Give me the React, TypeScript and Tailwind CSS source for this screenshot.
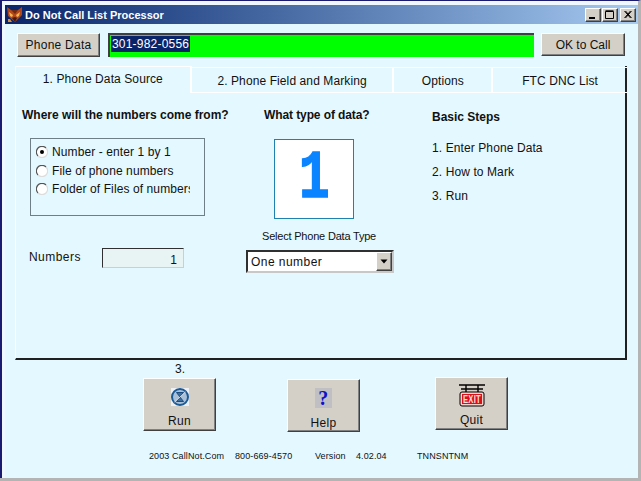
const raised =
  'bg-[#d4d0c8] border border-t-white border-l-white border-r-[#404040] border-b-[#404040] shadow-[inset_-1px_-1px_0_#808080]';

function FoxIcon() {
  return (
    <svg width="16" height="16" viewBox="0 0 16 16" className="shrink-0">
      <path d="M0 0 L4 3 H11 L15 0 L15 8 L8 15 L1 9 Z" fill="#b0481c" />
      <path d="M2 5 L6 8 L5 10 L3 9 Z M13 5 L9 8 L10 10 L12 9 Z" fill="#f0b848" />
      <path d="M5 11 L8 15 L10 11 L8 10 Z" fill="#4a1808" />
      <path d="M4 3 H11 L8 7 Z" fill="#702810" />
      <path d="M3 12 H1 V15 H5 Z" fill="#d89040" />
    </svg>
  );
}

function WinButton({ kind }: { kind: 'min' | 'max' | 'close' }) {
  return (
    <div className={`${raised} w-4 h-[14px] flex items-center justify-center`}>
      <svg width="10" height="9" viewBox="0 0 10 9">
        {kind === 'min' && <rect x="1" y="7" width="6" height="2" fill="#000" />}
        {kind === 'max' && <path d="M0.5 1.5 H8.5 V8.5 H0.5 Z M0.5 0.8 H8.5" fill="none" stroke="#000" />}
        {kind === 'close' && <path d="M1.5 1 L7.5 8 M2.5 1 L8.5 8 M7.5 1 L1.5 8 M8.5 1 L2.5 8" stroke="#000" />}
      </svg>
    </div>
  );
}

function Radio({ checked, label }: { checked?: boolean; label: string }) {
  return (
    <div className="flex items-center h-[18.5px] gap-[4px] whitespace-nowrap tracking-[0.1px]">
      <svg width="12" height="12" viewBox="0 0 12 12" className="shrink-0">
        <circle cx="6" cy="6" r="5.5" fill="#fff" />
        <path d="M10 2 A5.5 5.5 0 0 0 2 10" fill="none" stroke="#555" strokeWidth="1.2" />
        <path d="M10 2 A5.5 5.5 0 0 1 2 10" fill="none" stroke="#ddd" strokeWidth="1.2" />
        {checked && <circle cx="6" cy="6" r="2" fill="#000" />}
      </svg>
      <span className="w-[138px] overflow-hidden">{label}</span>
    </div>
  );
}

function Tab({ width, active, label }: { width: string; active?: boolean; label: string }) {
  return (
    <div
      className={`${width} flex justify-center border-r-2 border-[#202020] ${
        active ? 'h-[27px] pt-[5px] bg-[#e4f8ff] border-t border-white' : 'h-[26px] mt-[1px] pt-[6px] border-t border-b border-white'
      }`}
    >
      {label}
    </div>
  );
}

function RunIcon() {
  return (
    <svg width="20" height="20" viewBox="0 0 20 20">
      <rect x="1" y="1" width="18" height="18" fill="#eef0f4" />
      <circle cx="10" cy="10" r="8" fill="#a9c0d8" stroke="#1c5a96" strokeWidth="2" />
      <path d="M6.5 5.5 H13.5 L6.5 14.5 H13.5 Z" fill="#3c6fa0" stroke="#1c4c80" />
      <path d="M4.5 15 L15.5 5" stroke="#d0dce8" strokeWidth="1" />
    </svg>
  );
}

function HelpIcon() {
  return (
    <div className="w-[17px] h-5 bg-[#bfbfc4] flex items-center justify-center text-[#1010c8] font-bold text-[20px] leading-none font-['Liberation_Serif',serif]">
      ?
    </div>
  );
}

function ExitIcon() {
  return (
    <svg width="26" height="23" viewBox="0 0 26 23">
      <path d="M0 1 H26 M7 1 V8 M19 1 V8 M2 5 H24" stroke="#000" strokeWidth="1.4" fill="none" />
      <rect x="1" y="8" width="24" height="14" rx="2" fill="#f4d0c8" stroke="#000" />
      <rect x="3" y="10" width="20" height="10" fill="#e00c18" />
      <text transform="translate(13 19) scale(0.85 1.3)" textAnchor="middle" fontSize="9" fontWeight="700" fill="#f8e0e0" fontFamily="Liberation Sans, sans-serif">
        EXIT
      </text>
    </svg>
  );
}

export default function App() {
  return (
    <div className="w-[641px] h-[481px] overflow-hidden bg-[#b4b4b4] font-['Liberation_Sans',Arial,sans-serif] text-[12px] leading-[14px] tracking-[0.1px] text-[#111]">
      <div className="h-[478px] border-t border-t-[#1a1a70] border-l-2 border-l-[#1a1a70] border-r-[3px] border-r-[#b4b4b4] bg-[#f0f8ff] pt-[4px] pl-[3px] pr-0 flex flex-col">
        {/* title bar */}
        <div className="h-[19px] shrink-0 flex items-center pl-[2px] pr-[2px] bg-gradient-to-r from-[#0a246a] to-[#a6caf0]">
          <FoxIcon />
          <span className="ml-[2px] text-white font-bold text-[11px] tracking-[0px]">Do Not Call List Processor</span>
          <div className="ml-auto flex">
            <WinButton kind="min" />
            <div className="ml-[1px]"><WinButton kind="max" /></div>
            <div className="ml-[2px]"><WinButton kind="close" /></div>
          </div>
        </div>

        <div className="flex-1 bg-[#e4f8ff] flex flex-col">
          {/* phone row */}
          <div className="h-[42px] shrink-0 flex items-start pt-[9px] pl-[12px]">
            <div className={`${raised} w-[83px] h-[24px] flex items-center justify-center tracking-[0.25px]`}>Phone Data</div>
            <div className="ml-[8px] w-[426px] h-[24px] bg-[#00ff00] border-t-2 border-l-2 border-t-[#404040] border-l-[#404040] pl-[1px] pt-[2px] tracking-[0.2px]">
              <span className="bg-[#0a246a] text-white px-[1px] py-[1px]">301-982-0556</span>
            </div>
            <div className={`${raised} ml-[7px] w-[84px] h-[23px] flex items-center justify-center tracking-[0px]`}>OK to Call</div>
          </div>

          {/* tabs + panel */}
          <div className="ml-[10px] w-[612px] h-[294px] shrink-0 flex flex-col border-l border-l-white border-b-2 border-b-[#202020] border-r-2 border-r-[#202020]">
            <div className="flex shrink-0 -mr-[2px]">
              <Tab width="w-[176px]" active label="1. Phone Data Source" />
              <Tab width="w-[203px]" label="2. Phone Field and Marking" />
              <Tab width="w-[99px]" label="Options" />
              <div className="w-[134px] h-[26px] mt-[1px] pt-[6px] flex justify-center border-t border-b border-white">FTC DNC List</div>
            </div>

            <div className="flex-1 flex pt-[15px]">
              <div className="w-[240px] pl-[6px]">
                <div className="font-bold tracking-[0px] whitespace-nowrap">Where will the numbers come from?</div>
                <div className="ml-[8px] mt-[16px] w-[175px] h-[78px] border border-[#6f7f88] pt-[4px] pl-[5px] overflow-hidden">
                  <Radio checked label="Number - enter 1 by 1" />
                  <Radio label="File of phone numbers" />
                  <Radio label="Folder of Files of numbers" />
                </div>
                <div className="flex items-center mt-[32px] ml-[7px]">
                  <span className="w-[73px] mb-[3px] tracking-[0.45px]">Numbers</span>
                  <div className="w-[82px] h-[20px] bg-[#e8f4f4] border border-t-[#303030] border-l-[#303030] border-r-[#c8d0d0] border-b-[#c8d0d0] text-right pr-[6px] pt-[4px]">1</div>
                </div>
              </div>

              <div className="w-[148px] -ml-[10px] flex flex-col items-start">
                <div className="ml-[18px] font-bold tracking-[-0.1px] whitespace-nowrap">What type of data?</div>
                <div className="ml-[28px] mt-[17px] w-[80px] h-[80px] shrink-0 bg-white border border-[#2080b0] flex items-center justify-center">
                  <span className="text-[#0a84ff] font-bold text-[68px] leading-none tracking-normal font-['Liberation_Mono',monospace] scale-x-[0.75] [-webkit-text-stroke:1.5px_#0a84ff]">1</span>
                </div>
                <div className="ml-[16px] mt-[10px] text-[11px] tracking-[-0.2px] whitespace-nowrap">Select Phone Data Type</div>
                <div className="mt-[7px] w-[148px] h-[23px] bg-white border-2 border-t-[#303030] border-l-[#303030] border-r-[#c8c8c8] border-b-[#c8c8c8] flex items-center pl-[3px]">
                  <span className="flex-1 tracking-[0.45px]">One number</span>
                  <div className={`${raised} w-4 h-[19px] flex items-center justify-center`}>
                    <svg width="8" height="5" viewBox="0 0 8 5"><path d="M0.5 0.5 H7.5 L4 4.5 Z" fill="#000" /></svg>
                  </div>
                </div>
              </div>

              <div className="ml-[38px] pt-[2px] flex flex-col">
                <div className="font-bold tracking-[0px]">Basic Steps</div>
                <div className="mt-[17px]">1. Enter Phone Data</div>
                <div className="mt-[10px]">2. How to Mark</div>
                <div className="mt-[10px]">3. Run</div>
              </div>
            </div>
          </div>

          {/* bottom buttons */}
          <div className="h-[77px] shrink-0 flex items-start pl-[138px]">
            <div className="w-[73px] flex flex-col items-center">
              <div className="mt-[2px] h-[16px] ml-[1px]">3.</div>
              <div className={`${raised} w-[73px] h-[53px] flex flex-col items-center pt-[8px] tracking-[0.3px]`}>
                <RunIcon />
                <span className="mt-[7px]">Run</span>
              </div>
            </div>
            <div className={`${raised} ml-[71px] mt-[19px] w-[73px] h-[53px] flex flex-col items-center pt-[8px] tracking-[0.3px]`}>
              <HelpIcon />
              <span className="mt-[8px]">Help</span>
            </div>
            <div className={`${raised} ml-[75px] mt-[17px] w-[73px] h-[53px] flex flex-col items-center pt-[6px] tracking-[0.3px]`}>
              <ExitIcon />
              <span className="mt-[6px]">Quit</span>
            </div>
          </div>

          {/* footer */}
          <div className="flex pl-[144px] pt-[12px] text-[9px] tracking-[0.1px] whitespace-nowrap">
            <span className="w-[86px]">2003 CallNot.Com</span>
            <span className="w-[80px]">800-669-4570</span>
            <span className="w-[41px]">Version</span>
            <span className="w-[61px]">4.02.04</span>
            <span>TNNSNTNM</span>
          </div>
        </div>
      </div>
    </div>
  );
}
